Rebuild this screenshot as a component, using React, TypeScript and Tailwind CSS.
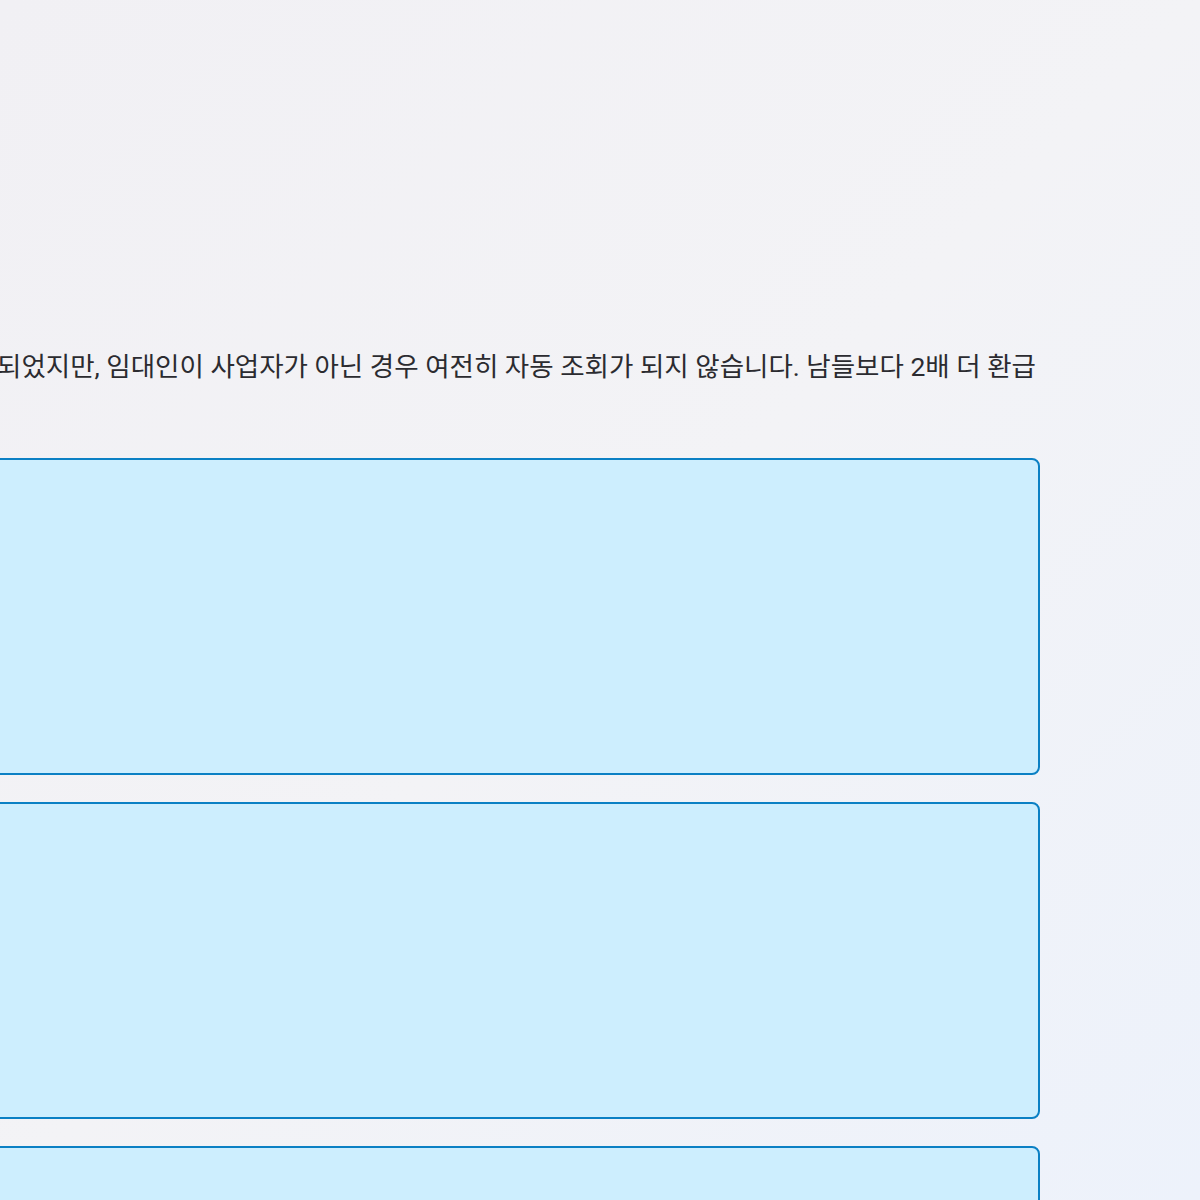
import React from 'react';

export default function App() {
    return (
        <div
            className="w-[1200px] h-[1200px] overflow-hidden bg-gradient-to-br from-[#f1f0f4] via-[#f3f3f6] to-[#edf2fb]"
            style={{ fontFamily: 'Roboto, "Noto Sans CJK KR", sans-serif' }}
        >
            <div className="w-[1040px] pt-[349px] flex flex-col">
                {/* text runs off the left edge */}
                <div className="flex justify-end pr-[4px]">
                    <p className="whitespace-nowrap text-[26.5px] leading-[36px] text-[#2b2b30]">
                        되었지만, 임대인이 사업자가 아닌 경우 여전히 자동 조회가 되지 않습니다. 남들보다 2배 더 환급
                    </p>
                </div>

                <div className="-ml-10 mt-[73px] flex flex-col gap-[27px]">
                    <div className="h-[317px] rounded-lg border-2 border-[#0b80c4] bg-[#cdeefe]"></div>
                    <div className="h-[317px] rounded-lg border-2 border-[#0b80c4] bg-[#cdeefe]"></div>
                    <div className="h-[317px] rounded-lg border-2 border-[#0b80c4] bg-[#cdeefe]"></div>
                </div>
            </div>
        </div>
    );
}
